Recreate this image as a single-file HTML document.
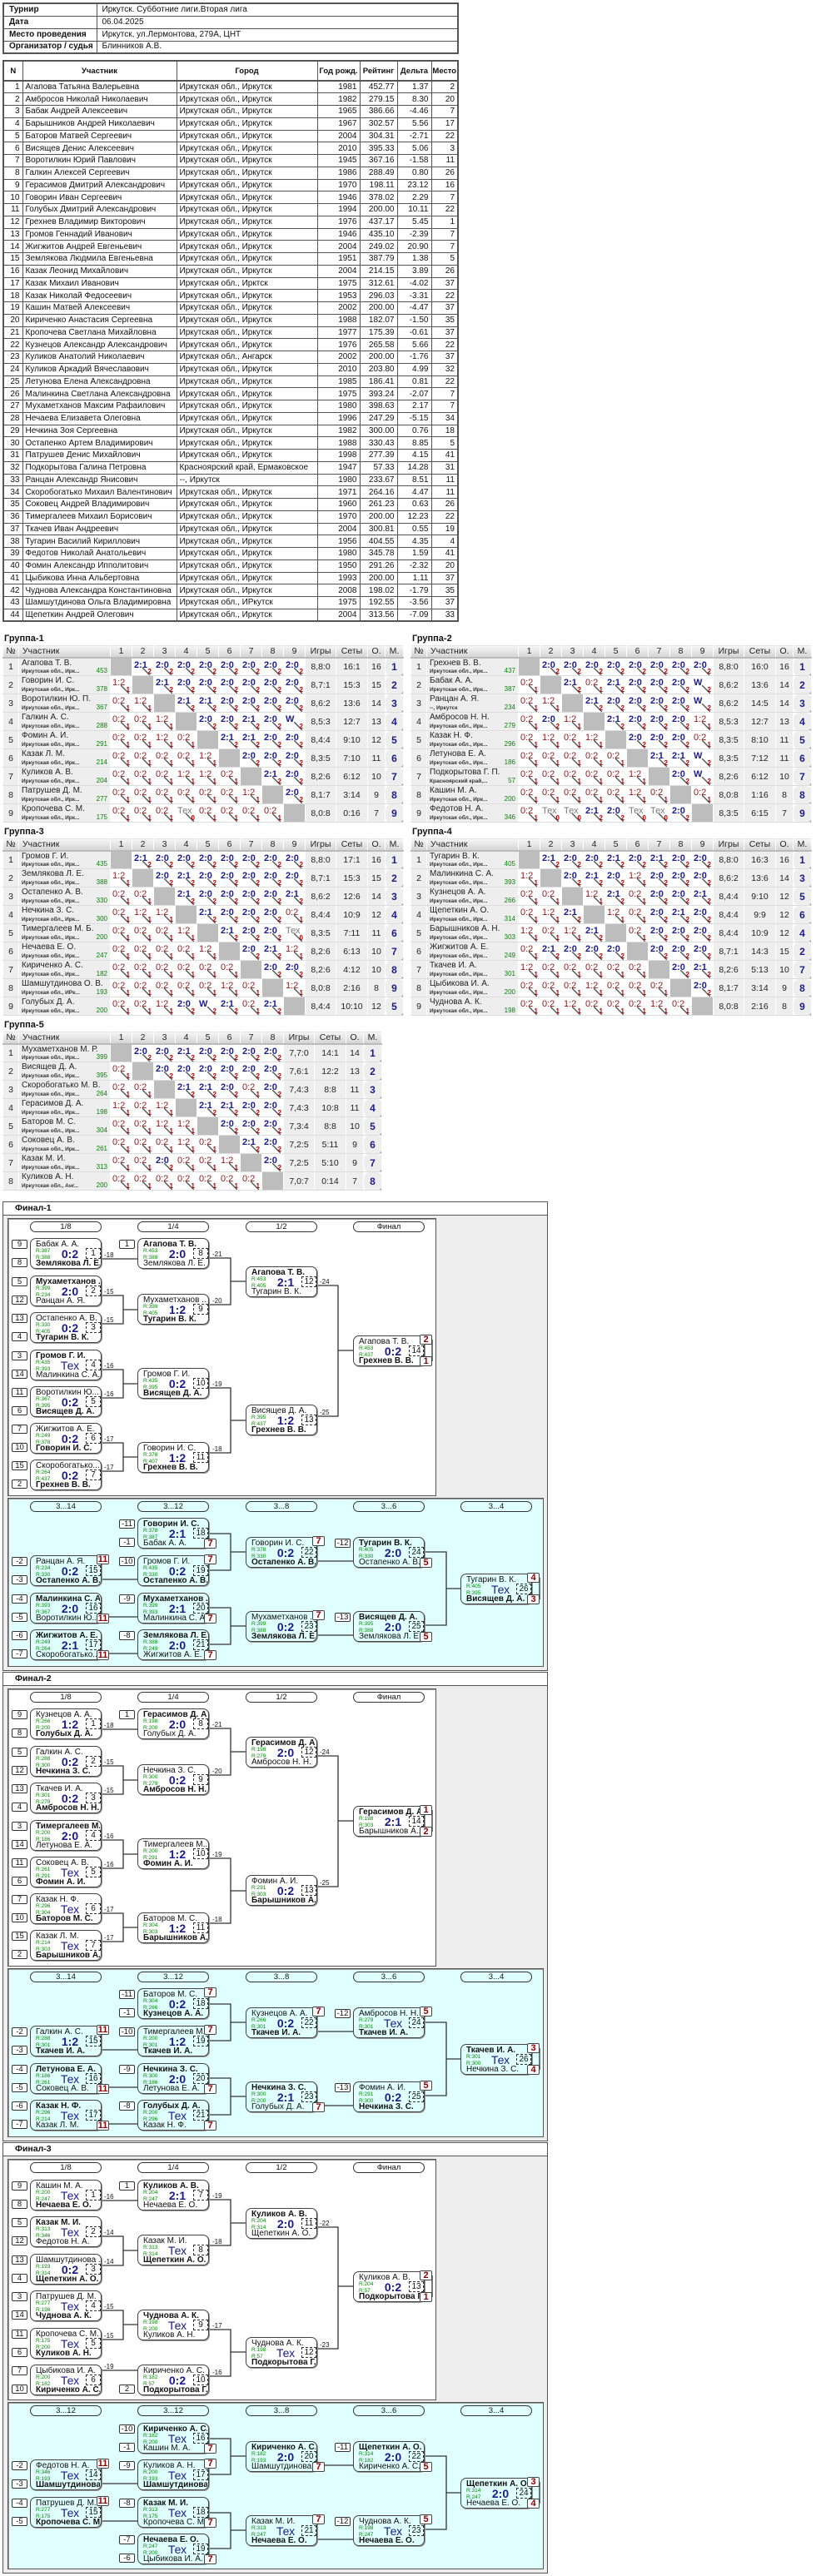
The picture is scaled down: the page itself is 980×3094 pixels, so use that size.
<!DOCTYPE html>
<html><head><meta charset="utf-8">
<style>
*{box-sizing:border-box}
body{margin:0;background:#fff;font-family:"Liberation Sans",Arial,sans-serif;color:#111}
#w{position:relative;width:980px;height:3094px;overflow:hidden}
table{border-collapse:collapse;table-layout:fixed}
.info{position:absolute;left:3px;top:3px;width:548px;font-size:10px;border:2px solid #555}
.info td{border:1px solid #555;height:15px;padding:0 0 0 6px;line-height:12px;white-space:nowrap;overflow:hidden}
.info td:first-child{font-weight:bold}
.pt{position:absolute;left:3px;top:72px;width:548px;font-size:10px;border:2px solid #555}
.pt th{height:24px;border:1px solid #555;border-bottom:2px solid #555;font-weight:bold;padding:0;font-size:9.5px;white-space:nowrap;overflow:hidden}
.pt td{height:14.75px;border:1px solid #555;padding:0 3px;line-height:11px;font-size:10px;white-space:nowrap;overflow:hidden}
.pt td.r{text-align:right}
.gl{position:absolute;font-weight:bold;font-size:11px}
table.g{position:absolute;font-size:11px;border:1px solid #ccc}
.g th{height:15px;background:linear-gradient(#f7f7f7,#d4d4d4);font-weight:normal;border:1px solid #fff;border-bottom:2px solid #bbb;padding:0;font-size:10.5px;color:#222}
.g th.nl{text-align:left;padding-left:4px}
.g td{height:22px;border:1px solid #fff;border-bottom:1px solid #ddd;background:#eee;padding:0;text-align:center;position:relative;font-size:10.5px;color:#222}
.g td.n{text-align:left;padding:0 3px;vertical-align:top;line-height:11px;font-size:10px;white-space:nowrap;overflow:hidden}
.g td.n small{position:absolute;left:3px;bottom:1px;font-size:6.5px;font-weight:bold;color:#333;line-height:7px;white-space:nowrap}
.g td.n b{position:absolute;right:3px;bottom:1px;font-size:8px;font-weight:normal;color:#080;line-height:8px}
.g td.x{background:#bdbdbd}
.g td.w,.g td.l,.g td.t{background:#fff linear-gradient(to top right,transparent 44%,#555 46%,#555 54%,transparent 56%) no-repeat 12px 11px/10px 10px;text-align:left;padding:2px 0 0 2px;vertical-align:top;line-height:12px;font-size:11px}
.g td.w{color:#1b1b8e;font-weight:bold}
.g td.l{color:#8a2020}
.g td.t{color:#777}
.g td u{position:absolute;right:2px;bottom:0;font-size:8px;text-decoration:none;font-weight:bold;color:#a00;line-height:9px}
.g td.m{color:#1b1b8e;font-weight:bold;font-size:12px}
.fo{position:absolute;left:3px;width:655px;border:1px solid #555;background:#eee}
.fh{position:absolute;left:4px;width:653px;height:16px;background:#fff;border-bottom:1px solid #555;font-size:10.5px;font-weight:bold;padding-left:14px;line-height:15px}
.pm{position:absolute;left:9px;width:515px;background:#fff;border:1px solid #555;box-shadow:inset 1px 1px 0 #999}
.pc{position:absolute;left:9px;width:644px;background:#e0ffff;border:1px solid #555;box-shadow:inset 1px 1px 0 #999}
.pi{position:absolute;width:86px;height:13px;border:1px solid #333;border-radius:7px;font-size:9.5px;line-height:11px;text-align:center;background:transparent}
.m{position:absolute;width:86px;height:37px;border:1px solid #444;border-radius:7px;background:#fff;box-shadow:1px 1px 0 #999}
.mc{background:#e0ffff}
.m p{position:absolute;left:6px;margin:0;font-size:10px;line-height:11px;white-space:nowrap;width:77px;overflow:hidden}
.m .a{top:1px}.m .z{top:24px}
.m .k{font-weight:bold}
.m i{position:absolute;left:6px;top:11px;font-style:normal;font-size:6.5px;line-height:7.5px;color:#080}
.m s{position:absolute;left:26px;width:42px;text-align:center;top:11px;text-decoration:none;font-weight:bold;font-size:14px;line-height:14px;color:#1a1a8a}
.m s.tx{font-weight:normal}
.m em{position:absolute;left:66px;top:11px;width:18px;height:13px;border:1px dashed #333;font-style:normal;font-size:10px;line-height:11px;text-align:center;background:inherit}
.sd{position:absolute;width:19px;height:11px;border:1px solid #333;border-radius:2px;font-size:9.5px;line-height:9px;text-align:center;background:#fff}
.pl{position:absolute;width:15px;height:12px;border:1px solid #444;border-radius:2px;background:#fff;color:#8b0000;font-weight:bold;font-size:11px;line-height:10px;text-align:center}
.lb{position:absolute;font-size:8px;line-height:8px}
svg{position:absolute;left:0;top:0}
</style></head><body><div id="w">

<table class="info">
<colgroup><col style="width:112px"><col></colgroup>
<tr><td>Турнир</td><td>Иркутск. Субботние лиги.Вторая лига</td></tr>
<tr><td>Дата</td><td>06.04.2025</td></tr>
<tr><td>Место проведения</td><td>Иркутск, ул.Лермонтова, 279А, ЦНТ</td></tr>
<tr><td>Организатор / судья</td><td>Блинников А.В.</td></tr>
</table>

<table class="pt">
<colgroup><col style="width:23px"><col style="width:185px"><col style="width:169px"><col style="width:51px"><col style="width:45px"><col style="width:41px"><col style="width:32px"></colgroup>
<tr><th>N</th><th>Участник</th><th>Город</th><th>Год рожд.</th><th>Рейтинг</th><th>Дельта</th><th>Место</th></tr>
<tr><td class="r">1</td><td>Агапова Татьяна Валерьевна</td><td>Иркутская обл., Иркутск</td><td class="r">1981</td><td class="r">452.77</td><td class="r">1.37</td><td class="r">2</td></tr>
<tr><td class="r">2</td><td>Амбросов Николай Николаевич</td><td>Иркутская обл., Иркутск</td><td class="r">1982</td><td class="r">279.15</td><td class="r">8.30</td><td class="r">20</td></tr>
<tr><td class="r">3</td><td>Бабак Андрей Алексеевич</td><td>Иркутская обл., Иркутск</td><td class="r">1965</td><td class="r">386.66</td><td class="r">-4.46</td><td class="r">7</td></tr>
<tr><td class="r">4</td><td>Барышников Андрей Николаевич</td><td>Иркутская обл., Иркутск</td><td class="r">1967</td><td class="r">302.57</td><td class="r">5.56</td><td class="r">17</td></tr>
<tr><td class="r">5</td><td>Баторов Матвей Сергеевич</td><td>Иркутская обл., Иркутск</td><td class="r">2004</td><td class="r">304.31</td><td class="r">-2.71</td><td class="r">22</td></tr>
<tr><td class="r">6</td><td>Висящев Денис Алексеевич</td><td>Иркутская обл., Иркутск</td><td class="r">2010</td><td class="r">395.33</td><td class="r">5.06</td><td class="r">3</td></tr>
<tr><td class="r">7</td><td>Воротилкин Юрий Павлович</td><td>Иркутская обл., Иркутск</td><td class="r">1945</td><td class="r">367.16</td><td class="r">-1.58</td><td class="r">11</td></tr>
<tr><td class="r">8</td><td>Галкин Алексей Сергеевич</td><td>Иркутская обл., Иркутск</td><td class="r">1986</td><td class="r">288.49</td><td class="r">0.80</td><td class="r">26</td></tr>
<tr><td class="r">9</td><td>Герасимов Дмитрий Александрович</td><td>Иркутская обл., Иркутск</td><td class="r">1970</td><td class="r">198.11</td><td class="r">23.12</td><td class="r">16</td></tr>
<tr><td class="r">10</td><td>Говорин Иван Сергеевич</td><td>Иркутская обл., Иркутск</td><td class="r">1946</td><td class="r">378.02</td><td class="r">2.29</td><td class="r">7</td></tr>
<tr><td class="r">11</td><td>Голубых Дмитрий Александрович</td><td>Иркутская обл., Иркутск</td><td class="r">1994</td><td class="r">200.00</td><td class="r">10.11</td><td class="r">22</td></tr>
<tr><td class="r">12</td><td>Грехнев Владимир Викторович</td><td>Иркутская обл., Иркутск</td><td class="r">1976</td><td class="r">437.17</td><td class="r">5.45</td><td class="r">1</td></tr>
<tr><td class="r">13</td><td>Громов Геннадий Иванович</td><td>Иркутская обл., Иркутск</td><td class="r">1946</td><td class="r">435.10</td><td class="r">-2.39</td><td class="r">7</td></tr>
<tr><td class="r">14</td><td>Жигжитов Андрей Евгеньевич</td><td>Иркутская обл., Иркутск</td><td class="r">2004</td><td class="r">249.02</td><td class="r">20.90</td><td class="r">7</td></tr>
<tr><td class="r">15</td><td>Землякова Людмила Евгеньевна</td><td>Иркутская обл., Иркутск</td><td class="r">1951</td><td class="r">387.79</td><td class="r">1.38</td><td class="r">5</td></tr>
<tr><td class="r">16</td><td>Казак Леонид Михайлович</td><td>Иркутская обл., Иркутск</td><td class="r">2004</td><td class="r">214.15</td><td class="r">3.89</td><td class="r">26</td></tr>
<tr><td class="r">17</td><td>Казак Михаил Иванович</td><td>Иркутская обл., Ирктск</td><td class="r">1975</td><td class="r">312.61</td><td class="r">-4.02</td><td class="r">37</td></tr>
<tr><td class="r">18</td><td>Казак Николай Федосеевич</td><td>Иркутская обл., Иркутск</td><td class="r">1953</td><td class="r">296.03</td><td class="r">-3.31</td><td class="r">22</td></tr>
<tr><td class="r">19</td><td>Кашин Матвей Алексеевич</td><td>Иркутская обл., Иркутск</td><td class="r">2002</td><td class="r">200.00</td><td class="r">-4.47</td><td class="r">37</td></tr>
<tr><td class="r">20</td><td>Кириченко Анастасия Сергеевна</td><td>Иркутская обл., Иркутск</td><td class="r">1988</td><td class="r">182.07</td><td class="r">-1.50</td><td class="r">35</td></tr>
<tr><td class="r">21</td><td>Кропочева Светлана Михайловна</td><td>Иркутская обл., Иркутск</td><td class="r">1977</td><td class="r">175.39</td><td class="r">-0.61</td><td class="r">37</td></tr>
<tr><td class="r">22</td><td>Кузнецов Александр Александрович</td><td>Иркутская обл., Иркутск</td><td class="r">1976</td><td class="r">265.58</td><td class="r">5.66</td><td class="r">22</td></tr>
<tr><td class="r">23</td><td>Куликов Анатолий Николаевич</td><td>Иркутская обл., Ангарск</td><td class="r">2002</td><td class="r">200.00</td><td class="r">-1.76</td><td class="r">37</td></tr>
<tr><td class="r">24</td><td>Куликов Аркадий Вячеславович</td><td>Иркутская обл., Иркутск</td><td class="r">2010</td><td class="r">203.80</td><td class="r">4.99</td><td class="r">32</td></tr>
<tr><td class="r">25</td><td>Летунова Елена Александровна</td><td>Иркутская обл., Иркутск</td><td class="r">1985</td><td class="r">186.41</td><td class="r">0.81</td><td class="r">22</td></tr>
<tr><td class="r">26</td><td>Малинкина Светлана Александровна</td><td>Иркутская обл., Иркутск</td><td class="r">1975</td><td class="r">393.24</td><td class="r">-2.07</td><td class="r">7</td></tr>
<tr><td class="r">27</td><td>Мухаметханов Максим Рафаилович</td><td>Иркутская обл., Иркутск</td><td class="r">1980</td><td class="r">398.63</td><td class="r">2.17</td><td class="r">7</td></tr>
<tr><td class="r">28</td><td>Нечаева Елизавета Олеговна</td><td>Иркутская обл., Иркутск</td><td class="r">1996</td><td class="r">247.29</td><td class="r">-5.15</td><td class="r">34</td></tr>
<tr><td class="r">29</td><td>Нечкина Зоя Сергеевна</td><td>Иркутская обл., Иркутск</td><td class="r">1982</td><td class="r">300.00</td><td class="r">0.76</td><td class="r">18</td></tr>
<tr><td class="r">30</td><td>Остапенко Артем Владимирович</td><td>Иркутская обл., Иркутск</td><td class="r">1988</td><td class="r">330.43</td><td class="r">8.85</td><td class="r">5</td></tr>
<tr><td class="r">31</td><td>Патрушев Денис Михайлович</td><td>Иркутская обл., Иркутск</td><td class="r">1998</td><td class="r">277.39</td><td class="r">4.15</td><td class="r">41</td></tr>
<tr><td class="r">32</td><td>Подкорытова Галина Петровна</td><td>Красноярский край, Ермаковское</td><td class="r">1947</td><td class="r">57.33</td><td class="r">14.28</td><td class="r">31</td></tr>
<tr><td class="r">33</td><td>Ранцан Александр Янисович</td><td>--, Иркутск</td><td class="r">1980</td><td class="r">233.67</td><td class="r">8.51</td><td class="r">11</td></tr>
<tr><td class="r">34</td><td>Скоробогатько Михаил Валентинович</td><td>Иркутская обл., Иркутск</td><td class="r">1971</td><td class="r">264.16</td><td class="r">4.47</td><td class="r">11</td></tr>
<tr><td class="r">35</td><td>Соковец Андрей Владимирович</td><td>Иркутская обл., Иркутск</td><td class="r">1960</td><td class="r">261.23</td><td class="r">0.63</td><td class="r">26</td></tr>
<tr><td class="r">36</td><td>Тимергалеев Михаил Борисович</td><td>Иркутская обл., Иркутск</td><td class="r">1970</td><td class="r">200.00</td><td class="r">12.23</td><td class="r">22</td></tr>
<tr><td class="r">37</td><td>Ткачев Иван Андреевич</td><td>Иркутская обл., Иркутск</td><td class="r">2004</td><td class="r">300.81</td><td class="r">0.55</td><td class="r">19</td></tr>
<tr><td class="r">38</td><td>Тугарин Василий Кириллович</td><td>Иркутская обл., Иркутск</td><td class="r">1956</td><td class="r">404.55</td><td class="r">4.35</td><td class="r">4</td></tr>
<tr><td class="r">39</td><td>Федотов Николай Анатольевич</td><td>Иркутская обл., Иркутск</td><td class="r">1980</td><td class="r">345.78</td><td class="r">1.59</td><td class="r">41</td></tr>
<tr><td class="r">40</td><td>Фомин Александр Ипполитович</td><td>Иркутская обл., Иркутск</td><td class="r">1950</td><td class="r">291.26</td><td class="r">-2.32</td><td class="r">20</td></tr>
<tr><td class="r">41</td><td>Цыбикова Инна Альбертовна</td><td>Иркутская обл., Иркутск</td><td class="r">1993</td><td class="r">200.00</td><td class="r">1.11</td><td class="r">37</td></tr>
<tr><td class="r">42</td><td>Чуднова Александра Константиновна</td><td>Иркутская обл., Иркутск</td><td class="r">2008</td><td class="r">198.02</td><td class="r">-1.79</td><td class="r">35</td></tr>
<tr><td class="r">43</td><td>Шамшутдинова Ольга Владимировна</td><td>Иркутская обл., ИРкутск</td><td class="r">1975</td><td class="r">192.55</td><td class="r">-3.56</td><td class="r">37</td></tr>
<tr><td class="r">44</td><td>Щепеткин Андрей Олегович</td><td>Иркутская обл., Иркутск</td><td class="r">2004</td><td class="r">313.56</td><td class="r">-7.09</td><td class="r">33</td></tr>
</table>

<!-- GROUP 1 -->
<div class="gl" style="left:5px;top:761px">Группа-1</div>
<table class="g" style="left:3px;top:774px;width:482px">
<colgroup><col style="width:19px"><col style="width:110px"><col style="width:26px"><col style="width:26px"><col style="width:26px"><col style="width:26px"><col style="width:26px"><col style="width:26px"><col style="width:26px"><col style="width:26px"><col style="width:26px"><col style="width:37px"><col style="width:38px"><col style="width:21px"><col style="width:22px"></colgroup>
<tr><th>№</th><th class="nl">Участник</th><th>1</th><th>2</th><th>3</th><th>4</th><th>5</th><th>6</th><th>7</th><th>8</th><th>9</th><th>Игры</th><th>Сеты</th><th>О.</th><th>М.</th></tr>
<tr><td>1</td><td class="n">Агапова Т. В.<small>Иркутская обл., Ирк...</small><b>453</b></td><td class="x"></td><td class="w">2:1<u>2</u></td><td class="w">2:0<u>2</u></td><td class="w">2:0<u>2</u></td><td class="w">2:0<u>2</u></td><td class="w">2:0<u>2</u></td><td class="w">2:0<u>2</u></td><td class="w">2:0<u>2</u></td><td class="w">2:0<u>2</u></td><td>8,8:0</td><td>16:1</td><td>16</td><td class="m">1</td></tr>
<tr><td>2</td><td class="n">Говорин И. С.<small>Иркутская обл., Ирк...</small><b>378</b></td><td class="l">1:2<u>1</u></td><td class="x"></td><td class="w">2:1<u>2</u></td><td class="w">2:0<u>2</u></td><td class="w">2:0<u>2</u></td><td class="w">2:0<u>2</u></td><td class="w">2:0<u>2</u></td><td class="w">2:0<u>2</u></td><td class="w">2:0<u>2</u></td><td>8,7:1</td><td>15:3</td><td>15</td><td class="m">2</td></tr>
<tr><td>3</td><td class="n">Воротилкин Ю. П.<small>Иркутская обл., Ирк...</small><b>367</b></td><td class="l">0:2<u>1</u></td><td class="l">1:2<u>1</u></td><td class="x"></td><td class="w">2:1<u>2</u></td><td class="w">2:1<u>2</u></td><td class="w">2:0<u>2</u></td><td class="w">2:0<u>2</u></td><td class="w">2:0<u>2</u></td><td class="w">2:0<u>2</u></td><td>8,6:2</td><td>13:6</td><td>14</td><td class="m">3</td></tr>
<tr><td>4</td><td class="n">Галкин А. С.<small>Иркутская обл., Ирк...</small><b>288</b></td><td class="l">0:2<u>1</u></td><td class="l">0:2<u>1</u></td><td class="l">1:2<u>1</u></td><td class="x"></td><td class="w">2:0<u>2</u></td><td class="w">2:0<u>2</u></td><td class="w">2:1<u>2</u></td><td class="w">2:0<u>2</u></td><td class="w">W<u>2</u></td><td>8,5:3</td><td>12:7</td><td>13</td><td class="m">4</td></tr>
<tr><td>5</td><td class="n">Фомин А. И.<small>Иркутская обл., Ирк...</small><b>291</b></td><td class="l">0:2<u>1</u></td><td class="l">0:2<u>1</u></td><td class="l">1:2<u>1</u></td><td class="l">0:2<u>1</u></td><td class="x"></td><td class="w">2:1<u>2</u></td><td class="w">2:1<u>2</u></td><td class="w">2:0<u>2</u></td><td class="w">2:0<u>2</u></td><td>8,4:4</td><td>9:10</td><td>12</td><td class="m">5</td></tr>
<tr><td>6</td><td class="n">Казак Л. М.<small>Иркутская обл., Ирк...</small><b>214</b></td><td class="l">0:2<u>1</u></td><td class="l">0:2<u>1</u></td><td class="l">0:2<u>1</u></td><td class="l">0:2<u>1</u></td><td class="l">1:2<u>1</u></td><td class="x"></td><td class="w">2:0<u>2</u></td><td class="w">2:0<u>2</u></td><td class="w">2:0<u>2</u></td><td>8,3:5</td><td>7:10</td><td>11</td><td class="m">6</td></tr>
<tr><td>7</td><td class="n">Куликов А. В.<small>Иркутская обл., Ирк...</small><b>204</b></td><td class="l">0:2<u>1</u></td><td class="l">0:2<u>1</u></td><td class="l">0:2<u>1</u></td><td class="l">1:2<u>1</u></td><td class="l">1:2<u>1</u></td><td class="l">0:2<u>1</u></td><td class="x"></td><td class="w">2:1<u>2</u></td><td class="w">2:0<u>2</u></td><td>8,2:6</td><td>6:12</td><td>10</td><td class="m">7</td></tr>
<tr><td>8</td><td class="n">Патрушев Д. М.<small>Иркутская обл., Ирк...</small><b>277</b></td><td class="l">0:2<u>1</u></td><td class="l">0:2<u>1</u></td><td class="l">0:2<u>1</u></td><td class="l">0:2<u>1</u></td><td class="l">0:2<u>1</u></td><td class="l">0:2<u>1</u></td><td class="l">1:2<u>1</u></td><td class="x"></td><td class="w">2:0<u>2</u></td><td>8,1:7</td><td>3:14</td><td>9</td><td class="m">8</td></tr>
<tr><td>9</td><td class="n">Кропочева С. М.<small>Иркутская обл., Ирк...</small><b>175</b></td><td class="l">0:2<u>1</u></td><td class="l">0:2<u>1</u></td><td class="l">0:2<u>1</u></td><td class="t">Тех<u>0</u></td><td class="l">0:2<u>1</u></td><td class="l">0:2<u>1</u></td><td class="l">0:2<u>1</u></td><td class="l">0:2<u>1</u></td><td class="x"></td><td>8,0:8</td><td>0:16</td><td>7</td><td class="m">9</td></tr>
</table>

<!-- GROUP 2 -->
<div class="gl" style="left:495px;top:761px">Группа-2</div>
<table class="g" style="left:493px;top:774px;width:482px">
<colgroup><col style="width:19px"><col style="width:110px"><col style="width:26px"><col style="width:26px"><col style="width:26px"><col style="width:26px"><col style="width:26px"><col style="width:26px"><col style="width:26px"><col style="width:26px"><col style="width:26px"><col style="width:37px"><col style="width:38px"><col style="width:21px"><col style="width:22px"></colgroup>
<tr><th>№</th><th class="nl">Участник</th><th>1</th><th>2</th><th>3</th><th>4</th><th>5</th><th>6</th><th>7</th><th>8</th><th>9</th><th>Игры</th><th>Сеты</th><th>О.</th><th>М.</th></tr>
<tr><td>1</td><td class="n">Грехнев В. В.<small>Иркутская обл., Ирк...</small><b>437</b></td><td class="x"></td><td class="w">2:0<u>2</u></td><td class="w">2:0<u>2</u></td><td class="w">2:0<u>2</u></td><td class="w">2:0<u>2</u></td><td class="w">2:0<u>2</u></td><td class="w">2:0<u>2</u></td><td class="w">2:0<u>2</u></td><td class="w">2:0<u>2</u></td><td>8,8:0</td><td>16:0</td><td>16</td><td class="m">1</td></tr>
<tr><td>2</td><td class="n">Бабак А. А.<small>Иркутская обл., Ирк...</small><b>387</b></td><td class="l">0:2<u>1</u></td><td class="x"></td><td class="w">2:1<u>2</u></td><td class="l">0:2<u>1</u></td><td class="w">2:1<u>2</u></td><td class="w">2:0<u>2</u></td><td class="w">2:0<u>2</u></td><td class="w">2:0<u>2</u></td><td class="w">W<u>2</u></td><td>8,6:2</td><td>13:6</td><td>14</td><td class="m">2</td></tr>
<tr><td>3</td><td class="n">Ранцан А. Я.<small>--, Иркутск</small><b>234</b></td><td class="l">0:2<u>1</u></td><td class="l">1:2<u>1</u></td><td class="x"></td><td class="w">2:1<u>2</u></td><td class="w">2:0<u>2</u></td><td class="w">2:0<u>2</u></td><td class="w">2:0<u>2</u></td><td class="w">2:0<u>2</u></td><td class="w">W<u>2</u></td><td>8,6:2</td><td>14:5</td><td>14</td><td class="m">3</td></tr>
<tr><td>4</td><td class="n">Амбросов Н. Н.<small>Иркутская обл., Ирк...</small><b>279</b></td><td class="l">0:2<u>1</u></td><td class="w">2:0<u>2</u></td><td class="l">1:2<u>1</u></td><td class="x"></td><td class="w">2:1<u>2</u></td><td class="w">2:0<u>2</u></td><td class="w">2:0<u>2</u></td><td class="w">2:0<u>2</u></td><td class="l">1:2<u>1</u></td><td>8,5:3</td><td>12:7</td><td>13</td><td class="m">4</td></tr>
<tr><td>5</td><td class="n">Казак Н. Ф.<small>Иркутская обл., Ирк...</small><b>296</b></td><td class="l">0:2<u>1</u></td><td class="l">1:2<u>1</u></td><td class="l">0:2<u>1</u></td><td class="l">1:2<u>1</u></td><td class="x"></td><td class="w">2:0<u>2</u></td><td class="w">2:0<u>2</u></td><td class="w">2:0<u>2</u></td><td class="l">0:2<u>1</u></td><td>8,3:5</td><td>8:10</td><td>11</td><td class="m">5</td></tr>
<tr><td>6</td><td class="n">Летунова Е. А.<small>Иркутская обл., Ирк...</small><b>186</b></td><td class="l">0:2<u>1</u></td><td class="l">0:2<u>1</u></td><td class="l">0:2<u>1</u></td><td class="l">0:2<u>1</u></td><td class="l">0:2<u>1</u></td><td class="x"></td><td class="w">2:1<u>2</u></td><td class="w">2:1<u>2</u></td><td class="w">W<u>2</u></td><td>8,3:5</td><td>7:12</td><td>11</td><td class="m">6</td></tr>
<tr><td>7</td><td class="n">Подкорытова Г. П.<small>Красноярский край,...</small><b>57</b></td><td class="l">0:2<u>1</u></td><td class="l">0:2<u>1</u></td><td class="l">0:2<u>1</u></td><td class="l">0:2<u>1</u></td><td class="l">0:2<u>1</u></td><td class="l">1:2<u>1</u></td><td class="x"></td><td class="w">2:0<u>2</u></td><td class="w">W<u>2</u></td><td>8,2:6</td><td>6:12</td><td>10</td><td class="m">7</td></tr>
<tr><td>8</td><td class="n">Кашин М. А.<small>Иркутская обл., Ирк...</small><b>200</b></td><td class="l">0:2<u>1</u></td><td class="l">0:2<u>1</u></td><td class="l">0:2<u>1</u></td><td class="l">0:2<u>1</u></td><td class="l">0:2<u>1</u></td><td class="l">1:2<u>1</u></td><td class="l">0:2<u>1</u></td><td class="x"></td><td class="l">0:2<u>1</u></td><td>8,0:8</td><td>1:16</td><td>8</td><td class="m">8</td></tr>
<tr><td>9</td><td class="n">Федотов Н. А.<small>Иркутская обл., Ирк...</small><b>346</b></td><td class="l">0:2<u>1</u></td><td class="t">Тех<u>0</u></td><td class="t">Тех<u>0</u></td><td class="w">2:1<u>2</u></td><td class="w">2:0<u>2</u></td><td class="t">Тех<u>0</u></td><td class="t">Тех<u>0</u></td><td class="w">2:0<u>2</u></td><td class="x"></td><td>8,3:5</td><td>6:15</td><td>7</td><td class="m">9</td></tr>
</table>

<!-- GROUP 3 -->
<div class="gl" style="left:5px;top:993px">Группа-3</div>
<table class="g" style="left:3px;top:1006px;width:482px">
<colgroup><col style="width:19px"><col style="width:110px"><col style="width:26px"><col style="width:26px"><col style="width:26px"><col style="width:26px"><col style="width:26px"><col style="width:26px"><col style="width:26px"><col style="width:26px"><col style="width:26px"><col style="width:37px"><col style="width:38px"><col style="width:21px"><col style="width:22px"></colgroup>
<tr><th>№</th><th class="nl">Участник</th><th>1</th><th>2</th><th>3</th><th>4</th><th>5</th><th>6</th><th>7</th><th>8</th><th>9</th><th>Игры</th><th>Сеты</th><th>О.</th><th>М.</th></tr>
<tr><td>1</td><td class="n">Громов Г. И.<small>Иркутская обл., Ирк...</small><b>435</b></td><td class="x"></td><td class="w">2:1<u>2</u></td><td class="w">2:0<u>2</u></td><td class="w">2:0<u>2</u></td><td class="w">2:0<u>2</u></td><td class="w">2:0<u>2</u></td><td class="w">2:0<u>2</u></td><td class="w">2:0<u>2</u></td><td class="w">2:0<u>2</u></td><td>8,8:0</td><td>17:1</td><td>16</td><td class="m">1</td></tr>
<tr><td>2</td><td class="n">Землякова Л. Е.<small>Иркутская обл., Ирк...</small><b>388</b></td><td class="l">1:2<u>1</u></td><td class="x"></td><td class="w">2:0<u>2</u></td><td class="w">2:1<u>2</u></td><td class="w">2:0<u>2</u></td><td class="w">2:0<u>2</u></td><td class="w">2:0<u>2</u></td><td class="w">2:0<u>2</u></td><td class="w">2:0<u>2</u></td><td>8,7:1</td><td>15:3</td><td>15</td><td class="m">2</td></tr>
<tr><td>3</td><td class="n">Остапенко А. В.<small>Иркутская обл., Ирк...</small><b>330</b></td><td class="l">0:2<u>1</u></td><td class="l">0:2<u>1</u></td><td class="x"></td><td class="w">2:1<u>2</u></td><td class="w">2:0<u>2</u></td><td class="w">2:0<u>2</u></td><td class="w">2:0<u>2</u></td><td class="w">2:0<u>2</u></td><td class="w">2:1<u>2</u></td><td>8,6:2</td><td>12:6</td><td>14</td><td class="m">3</td></tr>
<tr><td>4</td><td class="n">Нечкина З. С.<small>Иркутская обл., Ирк...</small><b>300</b></td><td class="l">0:2<u>1</u></td><td class="l">1:2<u>1</u></td><td class="l">1:2<u>1</u></td><td class="x"></td><td class="w">2:1<u>2</u></td><td class="w">2:0<u>2</u></td><td class="w">2:0<u>2</u></td><td class="w">2:0<u>2</u></td><td class="l">0:2<u>1</u></td><td>8,4:4</td><td>10:9</td><td>12</td><td class="m">4</td></tr>
<tr><td>5</td><td class="n">Тимергалеев М. Б.<small>Иркутская обл., Ирк...</small><b>200</b></td><td class="l">0:2<u>1</u></td><td class="l">0:2<u>1</u></td><td class="l">0:2<u>1</u></td><td class="l">1:2<u>1</u></td><td class="x"></td><td class="w">2:1<u>2</u></td><td class="w">2:0<u>2</u></td><td class="w">2:0<u>2</u></td><td class="t">Тех<u>0</u></td><td>8,3:5</td><td>7:11</td><td>11</td><td class="m">6</td></tr>
<tr><td>6</td><td class="n">Нечаева Е. О.<small>Иркутская обл., Ирк...</small><b>247</b></td><td class="l">0:2<u>1</u></td><td class="l">0:2<u>1</u></td><td class="l">0:2<u>1</u></td><td class="l">0:2<u>1</u></td><td class="l">1:2<u>1</u></td><td class="x"></td><td class="w">2:0<u>2</u></td><td class="w">2:1<u>2</u></td><td class="l">1:2<u>1</u></td><td>8,2:6</td><td>6:13</td><td>10</td><td class="m">7</td></tr>
<tr><td>7</td><td class="n">Кириченко А. С.<small>Иркутская обл., Ирк...</small><b>182</b></td><td class="l">0:2<u>1</u></td><td class="l">0:2<u>1</u></td><td class="l">0:2<u>1</u></td><td class="l">0:2<u>1</u></td><td class="l">0:2<u>1</u></td><td class="l">0:2<u>1</u></td><td class="x"></td><td class="w">2:0<u>2</u></td><td class="w">2:0<u>2</u></td><td>8,2:6</td><td>4:12</td><td>10</td><td class="m">8</td></tr>
<tr><td>8</td><td class="n">Шамшутдинова О. В.<small>Иркутская обл., ИРк...</small><b>193</b></td><td class="l">0:2<u>1</u></td><td class="l">0:2<u>1</u></td><td class="l">0:2<u>1</u></td><td class="l">0:2<u>1</u></td><td class="l">0:2<u>1</u></td><td class="l">1:2<u>1</u></td><td class="l">0:2<u>1</u></td><td class="x"></td><td class="l">1:2<u>1</u></td><td>8,0:8</td><td>2:16</td><td>8</td><td class="m">9</td></tr>
<tr><td>9</td><td class="n">Голубых Д. А.<small>Иркутская обл., Ирк...</small><b>200</b></td><td class="l">0:2<u>1</u></td><td class="l">0:2<u>1</u></td><td class="l">1:2<u>1</u></td><td class="w">2:0<u>2</u></td><td class="w">W<u>2</u></td><td class="w">2:1<u>2</u></td><td class="l">0:2<u>1</u></td><td class="w">2:1<u>2</u></td><td class="x"></td><td>8,4:4</td><td>10:10</td><td>12</td><td class="m">5</td></tr>
</table>

<!-- GROUP 4 -->
<div class="gl" style="left:495px;top:993px">Группа-4</div>
<table class="g" style="left:493px;top:1006px;width:482px">
<colgroup><col style="width:19px"><col style="width:110px"><col style="width:26px"><col style="width:26px"><col style="width:26px"><col style="width:26px"><col style="width:26px"><col style="width:26px"><col style="width:26px"><col style="width:26px"><col style="width:26px"><col style="width:37px"><col style="width:38px"><col style="width:21px"><col style="width:22px"></colgroup>
<tr><th>№</th><th class="nl">Участник</th><th>1</th><th>2</th><th>3</th><th>4</th><th>5</th><th>6</th><th>7</th><th>8</th><th>9</th><th>Игры</th><th>Сеты</th><th>О.</th><th>М.</th></tr>
<tr><td>1</td><td class="n">Тугарин В. К.<small>Иркутская обл., Ирк...</small><b>405</b></td><td class="x"></td><td class="w">2:1<u>2</u></td><td class="w">2:0<u>2</u></td><td class="w">2:0<u>2</u></td><td class="w">2:1<u>2</u></td><td class="w">2:0<u>2</u></td><td class="w">2:1<u>2</u></td><td class="w">2:0<u>2</u></td><td class="w">2:0<u>2</u></td><td>8,8:0</td><td>16:3</td><td>16</td><td class="m">1</td></tr>
<tr><td>2</td><td class="n">Малинкина С. А.<small>Иркутская обл., Ирк...</small><b>393</b></td><td class="l">1:2<u>1</u></td><td class="x"></td><td class="w">2:0<u>2</u></td><td class="w">2:1<u>2</u></td><td class="w">2:0<u>2</u></td><td class="l">1:2<u>1</u></td><td class="w">2:0<u>2</u></td><td class="w">2:0<u>2</u></td><td class="w">2:0<u>2</u></td><td>8,6:2</td><td>13:6</td><td>14</td><td class="m">3</td></tr>
<tr><td>3</td><td class="n">Кузнецов А. А.<small>Иркутская обл., Ирк...</small><b>266</b></td><td class="l">0:2<u>1</u></td><td class="l">0:2<u>1</u></td><td class="x"></td><td class="l">1:2<u>1</u></td><td class="w">2:1<u>2</u></td><td class="l">0:2<u>1</u></td><td class="w">2:0<u>2</u></td><td class="w">2:0<u>2</u></td><td class="w">2:1<u>2</u></td><td>8,4:4</td><td>9:10</td><td>12</td><td class="m">5</td></tr>
<tr><td>4</td><td class="n">Щепеткин А. О.<small>Иркутская обл., Ирк...</small><b>314</b></td><td class="l">0:2<u>1</u></td><td class="l">1:2<u>1</u></td><td class="w">2:1<u>2</u></td><td class="x"></td><td class="l">1:2<u>1</u></td><td class="l">0:2<u>1</u></td><td class="w">2:0<u>2</u></td><td class="w">2:1<u>2</u></td><td class="w">2:0<u>2</u></td><td>8,4:4</td><td>9:9</td><td>12</td><td class="m">6</td></tr>
<tr><td>5</td><td class="n">Барышников А. Н.<small>Иркутская обл., Ирк...</small><b>303</b></td><td class="l">1:2<u>1</u></td><td class="l">0:2<u>1</u></td><td class="l">1:2<u>1</u></td><td class="w">2:1<u>2</u></td><td class="x"></td><td class="l">0:2<u>1</u></td><td class="w">2:0<u>2</u></td><td class="w">2:0<u>2</u></td><td class="w">2:0<u>2</u></td><td>8,4:4</td><td>10:9</td><td>12</td><td class="m">4</td></tr>
<tr><td>6</td><td class="n">Жигжитов А. Е.<small>Иркутская обл., Ирк...</small><b>249</b></td><td class="l">0:2<u>1</u></td><td class="w">2:1<u>2</u></td><td class="w">2:0<u>2</u></td><td class="w">2:0<u>2</u></td><td class="w">2:0<u>2</u></td><td class="x"></td><td class="w">2:0<u>2</u></td><td class="w">2:0<u>2</u></td><td class="w">2:0<u>2</u></td><td>8,7:1</td><td>14:3</td><td>15</td><td class="m">2</td></tr>
<tr><td>7</td><td class="n">Ткачев И. А.<small>Иркутская обл., Ирк...</small><b>301</b></td><td class="l">1:2<u>1</u></td><td class="l">0:2<u>1</u></td><td class="l">0:2<u>1</u></td><td class="l">0:2<u>1</u></td><td class="l">0:2<u>1</u></td><td class="l">0:2<u>1</u></td><td class="x"></td><td class="w">2:0<u>2</u></td><td class="w">2:1<u>2</u></td><td>8,2:6</td><td>5:13</td><td>10</td><td class="m">7</td></tr>
<tr><td>8</td><td class="n">Цыбикова И. А.<small>Иркутская обл., Ирк...</small><b>200</b></td><td class="l">0:2<u>1</u></td><td class="l">0:2<u>1</u></td><td class="l">0:2<u>1</u></td><td class="l">1:2<u>1</u></td><td class="l">0:2<u>1</u></td><td class="l">0:2<u>1</u></td><td class="l">0:2<u>1</u></td><td class="x"></td><td class="w">2:0<u>2</u></td><td>8,1:7</td><td>3:14</td><td>9</td><td class="m">8</td></tr>
<tr><td>9</td><td class="n">Чуднова А. К.<small>Иркутская обл., Ирк...</small><b>198</b></td><td class="l">0:2<u>1</u></td><td class="l">0:2<u>1</u></td><td class="l">1:2<u>1</u></td><td class="l">0:2<u>1</u></td><td class="l">0:2<u>1</u></td><td class="l">0:2<u>1</u></td><td class="l">1:2<u>1</u></td><td class="l">0:2<u>1</u></td><td class="x"></td><td>8,0:8</td><td>2:16</td><td>8</td><td class="m">9</td></tr>
</table>

<!-- GROUP 5 -->
<div class="gl" style="left:5px;top:1225px">Группа-5</div>
<table class="g" style="left:3px;top:1238px;width:456px">
<colgroup><col style="width:19px"><col style="width:110px"><col style="width:26px"><col style="width:26px"><col style="width:26px"><col style="width:26px"><col style="width:26px"><col style="width:26px"><col style="width:26px"><col style="width:26px"><col style="width:37px"><col style="width:38px"><col style="width:21px"><col style="width:22px"></colgroup>
<tr><th>№</th><th class="nl">Участник</th><th>1</th><th>2</th><th>3</th><th>4</th><th>5</th><th>6</th><th>7</th><th>8</th><th>Игры</th><th>Сеты</th><th>О.</th><th>М.</th></tr>
<tr><td>1</td><td class="n">Мухаметханов М. Р.<small>Иркутская обл., Ирк...</small><b>399</b></td><td class="x"></td><td class="w">2:0<u>2</u></td><td class="w">2:0<u>2</u></td><td class="w">2:1<u>2</u></td><td class="w">2:0<u>2</u></td><td class="w">2:0<u>2</u></td><td class="w">2:0<u>2</u></td><td class="w">2:0<u>2</u></td><td>7,7:0</td><td>14:1</td><td>14</td><td class="m">1</td></tr>
<tr><td>2</td><td class="n">Висящев Д. А.<small>Иркутская обл., Ирк...</small><b>395</b></td><td class="l">0:2<u>1</u></td><td class="x"></td><td class="w">2:0<u>2</u></td><td class="w">2:0<u>2</u></td><td class="w">2:0<u>2</u></td><td class="w">2:0<u>2</u></td><td class="w">2:0<u>2</u></td><td class="w">2:0<u>2</u></td><td>7,6:1</td><td>12:2</td><td>13</td><td class="m">2</td></tr>
<tr><td>3</td><td class="n">Скоробогатько М. В.<small>Иркутская обл., Ирк...</small><b>264</b></td><td class="l">0:2<u>1</u></td><td class="l">0:2<u>1</u></td><td class="x"></td><td class="w">2:1<u>2</u></td><td class="w">2:1<u>2</u></td><td class="w">2:0<u>2</u></td><td class="l">0:2<u>1</u></td><td class="w">2:0<u>2</u></td><td>7,4:3</td><td>8:8</td><td>11</td><td class="m">3</td></tr>
<tr><td>4</td><td class="n">Герасимов Д. А.<small>Иркутская обл., Ирк...</small><b>198</b></td><td class="l">1:2<u>1</u></td><td class="l">0:2<u>1</u></td><td class="l">1:2<u>1</u></td><td class="x"></td><td class="w">2:1<u>2</u></td><td class="w">2:1<u>2</u></td><td class="w">2:0<u>2</u></td><td class="w">2:0<u>2</u></td><td>7,4:3</td><td>10:8</td><td>11</td><td class="m">4</td></tr>
<tr><td>5</td><td class="n">Баторов М. С.<small>Иркутская обл., Ирк...</small><b>304</b></td><td class="l">0:2<u>1</u></td><td class="l">0:2<u>1</u></td><td class="l">1:2<u>1</u></td><td class="l">1:2<u>1</u></td><td class="x"></td><td class="w">2:0<u>2</u></td><td class="w">2:0<u>2</u></td><td class="w">2:0<u>2</u></td><td>7,3:4</td><td>8:8</td><td>10</td><td class="m">5</td></tr>
<tr><td>6</td><td class="n">Соковец А. В.<small>Иркутская обл., Ирк...</small><b>261</b></td><td class="l">0:2<u>1</u></td><td class="l">0:2<u>1</u></td><td class="l">0:2<u>1</u></td><td class="l">1:2<u>1</u></td><td class="l">0:2<u>1</u></td><td class="x"></td><td class="w">2:1<u>2</u></td><td class="w">2:0<u>2</u></td><td>7,2:5</td><td>5:11</td><td>9</td><td class="m">6</td></tr>
<tr><td>7</td><td class="n">Казак М. И.<small>Иркутская обл., Ирк...</small><b>313</b></td><td class="l">0:2<u>1</u></td><td class="l">0:2<u>1</u></td><td class="w">2:0<u>2</u></td><td class="l">0:2<u>1</u></td><td class="l">0:2<u>1</u></td><td class="l">1:2<u>1</u></td><td class="x"></td><td class="w">2:0<u>2</u></td><td>7,2:5</td><td>5:10</td><td>9</td><td class="m">7</td></tr>
<tr><td>8</td><td class="n">Куликов А. Н.<small>Иркутская обл., Анг...</small><b>200</b></td><td class="l">0:2<u>1</u></td><td class="l">0:2<u>1</u></td><td class="l">0:2<u>1</u></td><td class="l">0:2<u>1</u></td><td class="l">0:2<u>1</u></td><td class="l">0:2<u>1</u></td><td class="l">0:2<u>1</u></td><td class="x"></td><td>7,0:7</td><td>0:14</td><td>7</td><td class="m">8</td></tr>
</table>

<!-- FRAMES -->
<div class="fo" style="top:1443px;height:564px"></div>
<div class="fh" style="top:1444px">Финал-1</div>
<div class="pm" style="top:1463px;height:334px"></div>
<div class="pc" style="top:1799px;height:203px"></div>

<div class="fo" style="top:2008px;height:564px"></div>
<div class="fh" style="top:2009px">Финал-2</div>
<div class="pm" style="top:2028px;height:334px"></div>
<div class="pc" style="top:2364px;height:203px"></div>

<div class="fo" style="top:2573px;height:518px"></div>
<div class="fh" style="top:2574px">Финал-3</div>
<div class="pm" style="top:2593px;height:290px"></div>
<div class="pc" style="top:2885px;height:201px"></div>

<svg width="980" height="3094" fill="none" stroke="#333" stroke-width="1.3">
<path d="M122 1512H165M122 1556H148V1590H122M148 1573H165M122 1645H148V1679H122M148 1662H165M122 1733H148V1767H122M148 1750H165M252 1511H277V1567H252M277 1539H295M252 1667H277V1745H252M277 1706H295M381 1544H406V1701H381M406 1622H424"/>
<path d="M122 1897H165M122 1942H165M122 1986H165M252 1842H277V1886H252M277 1864H295M252 1931H277V1975H252M277 1953H295M381 1875H424M381 1964H424M511 1864H536V1952H511M536 1908H553"/>
<path d="M122 2077H165M122 2121H148V2155H122M148 2138H165M122 2210H148V2244H122M148 2227H165M122 2298H148V2332H122M148 2315H165M252 2076H277V2132H252M277 2104H295M252 2232H277V2310H252M277 2271H295M381 2109H406V2266H381M406 2187H424"/>
<path d="M122 2462H165M122 2507H165M122 2551H165M252 2407H277V2451H252M277 2429H295M252 2496H277V2540H252M277 2518H295M381 2440H424M381 2529H424M511 2429H536V2517H511M536 2473H553"/>
<path d="M122 2643H165M122 2686H148V2721H122M148 2703H165M122 2775H148V2810H122M148 2792H165M122 2847H165M252 2642H277V2697H252M277 2670H295M252 2798H277V2854H252M277 2825H295M381 2675H406V2821H381M406 2746H424"/>
<path d="M122 2983H165M122 3028H165M252 2929H277V2972H252M277 2950H295M252 3018H277V3061H252M277 3039H295M381 2961H424M381 3050H424M511 2950H536V3038H511M536 2994H553"/>
<path d="M519 1609V1635M519 2174V2200M519 2733V2759M648 1895V1921M648 2460V2486M648 2981V3007"/>
</svg>

<!-- ===== FINAL-1 ===== -->
<div class="pi" style="left:36px;top:1467px">1/8</div><div class="pi" style="left:165px;top:1467px">1/4</div><div class="pi" style="left:295px;top:1467px">1/2</div><div class="pi" style="left:424px;top:1467px">Финал</div>
<div class="sd" style="left:14px;top:1489px">9</div><div class="sd" style="left:14px;top:1511px">8</div>
<div class="sd" style="left:14px;top:1534px">5</div><div class="sd" style="left:14px;top:1556px">12</div>
<div class="sd" style="left:14px;top:1578px">13</div><div class="sd" style="left:14px;top:1600px">4</div>
<div class="sd" style="left:14px;top:1623px">3</div><div class="sd" style="left:14px;top:1645px">14</div>
<div class="sd" style="left:14px;top:1667px">11</div><div class="sd" style="left:14px;top:1689px">6</div>
<div class="sd" style="left:14px;top:1711px">7</div><div class="sd" style="left:14px;top:1733px">10</div>
<div class="sd" style="left:14px;top:1755px">15</div><div class="sd" style="left:14px;top:1777px">2</div>
<div class="sd" style="left:143px;top:1489px">1</div>
<div class="m" style="left:36px;top:1487px"><p class="a">Бабак А. А.</p><i>R:387<br>R:388</i><s>0:2</s><em>1</em><p class="z k">Землякова Л. Е.</p></div>
<div class="m" style="left:36px;top:1532px"><p class="a k">Мухаметханов ...</p><i>R:399<br>R:234</i><s>2:0</s><em>2</em><p class="z">Ранцан А. Я.</p></div>
<div class="m" style="left:36px;top:1576px"><p class="a">Остапенко А. В.</p><i>R:330<br>R:405</i><s>0:2</s><em>3</em><p class="z k">Тугарин В. К.</p></div>
<div class="m" style="left:36px;top:1621px"><p class="a k">Громов Г. И.</p><i>R:435<br>R:393</i><s class="tx">Тех</s><em>4</em><p class="z">Малинкина С. А.</p></div>
<div class="m" style="left:36px;top:1665px"><p class="a">Воротилкин Ю....</p><i>R:367<br>R:395</i><s>0:2</s><em>5</em><p class="z k">Висящев Д. А.</p></div>
<div class="m" style="left:36px;top:1709px"><p class="a">Жигжитов А. Е.</p><i>R:249<br>R:378</i><s>0:2</s><em>6</em><p class="z k">Говорин И. С.</p></div>
<div class="m" style="left:36px;top:1753px"><p class="a">Скоробогатько...</p><i>R:264<br>R:437</i><s>0:2</s><em>7</em><p class="z k">Грехнев В. В.</p></div>
<div class="m" style="left:165px;top:1487px"><p class="a k">Агапова Т. В.</p><i>R:453<br>R:388</i><s>2:0</s><em>8</em><p class="z">Землякова Л. Е.</p></div>
<div class="m" style="left:165px;top:1554px"><p class="a">Мухаметханов ...</p><i>R:399<br>R:405</i><s>1:2</s><em>9</em><p class="z k">Тугарин В. К.</p></div>
<div class="m" style="left:165px;top:1643px"><p class="a">Громов Г. И.</p><i>R:435<br>R:395</i><s>0:2</s><em>10</em><p class="z k">Висящев Д. А.</p></div>
<div class="m" style="left:165px;top:1732px"><p class="a">Говорин И. С.</p><i>R:378<br>R:407</i><s>1:2</s><em>11</em><p class="z k">Грехнев В. В.</p></div>
<div class="m" style="left:295px;top:1521px"><p class="a k">Агапова Т. В.</p><i>R:453<br>R:405</i><s>2:1</s><em>12</em><p class="z">Тугарин В. К.</p></div>
<div class="m" style="left:295px;top:1687px"><p class="a">Висящев Д. А.</p><i>R:395<br>R:437</i><s>1:2</s><em>13</em><p class="z k">Грехнев В. В.</p></div>
<div class="m" style="left:424px;top:1604px"><p class="a">Агапова Т. В.</p><i>R:453<br>R:437</i><s>0:2</s><em>14</em><p class="z k">Грехнев В. В.</p></div>
<div class="pl" style="left:504px;top:1603px">2</div><div class="pl" style="left:504px;top:1629px">1</div>
<div class="lb" style="left:125px;top:1504px">-18</div><div class="lb" style="left:125px;top:1548px">-15</div><div class="lb" style="left:125px;top:1582px">-15</div><div class="lb" style="left:125px;top:1637px">-16</div><div class="lb" style="left:125px;top:1671px">-16</div><div class="lb" style="left:125px;top:1725px">-17</div><div class="lb" style="left:125px;top:1759px">-17</div>
<div class="lb" style="left:255px;top:1503px">-21</div><div class="lb" style="left:255px;top:1559px">-20</div><div class="lb" style="left:255px;top:1659px">-19</div><div class="lb" style="left:255px;top:1737px">-18</div>
<div class="lb" style="left:384px;top:1536px">-24</div><div class="lb" style="left:384px;top:1693px">-25</div>

<div class="pi" style="left:36px;top:1803px">3...14</div><div class="pi" style="left:165px;top:1803px">3...12</div><div class="pi" style="left:295px;top:1803px">3...8</div><div class="pi" style="left:424px;top:1803px">3...6</div><div class="pi" style="left:553px;top:1803px">3...4</div>
<div class="sd" style="left:14px;top:1870px">-2</div><div class="sd" style="left:14px;top:1892px">-3</div>
<div class="sd" style="left:14px;top:1915px">-4</div><div class="sd" style="left:14px;top:1937px">-5</div>
<div class="sd" style="left:14px;top:1959px">-6</div><div class="sd" style="left:14px;top:1981px">-7</div>
<div class="sd" style="left:143px;top:1825px">-11</div><div class="sd" style="left:143px;top:1847px">-1</div>
<div class="sd" style="left:143px;top:1870px">-10</div><div class="sd" style="left:143px;top:1915px">-9</div><div class="sd" style="left:143px;top:1959px">-8</div>
<div class="sd" style="left:402px;top:1848px">-12</div><div class="sd" style="left:402px;top:1937px">-13</div>
<div class="m mc" style="left:36px;top:1868px"><p class="a">Ранцан А. Я.</p><i>R:234<br>R:330</i><s>0:2</s><em>15</em><p class="z k">Остапенко А. В.</p></div>
<div class="m mc" style="left:36px;top:1913px"><p class="a k">Малинкина С. А.</p><i>R:393<br>R:367</i><s>2:0</s><em>16</em><p class="z">Воротилкин Ю....</p></div>
<div class="m mc" style="left:36px;top:1957px"><p class="a k">Жигжитов А. Е.</p><i>R:249<br>R:264</i><s>2:1</s><em>17</em><p class="z">Скоробогатько...</p></div>
<div class="m mc" style="left:165px;top:1823px"><p class="a k">Говорин И. С.</p><i>R:378<br>R:387</i><s>2:1</s><em>18</em><p class="z">Бабак А. А.</p></div>
<div class="m mc" style="left:165px;top:1868px"><p class="a">Громов Г. И.</p><i>R:435<br>R:330</i><s>0:2</s><em>19</em><p class="z k">Остапенко А. В.</p></div>
<div class="m mc" style="left:165px;top:1913px"><p class="a k">Мухаметханов ...</p><i>R:399<br>R:393</i><s>2:1</s><em>20</em><p class="z">Малинкина С. А.</p></div>
<div class="m mc" style="left:165px;top:1957px"><p class="a k">Землякова Л. Е.</p><i>R:388<br>R:249</i><s>2:0</s><em>21</em><p class="z">Жигжитов А. Е.</p></div>
<div class="m mc" style="left:295px;top:1846px"><p class="a">Говорин И. С.</p><i>R:378<br>R:330</i><s>0:2</s><em>22</em><p class="z k">Остапенко А. В.</p></div>
<div class="m mc" style="left:295px;top:1935px"><p class="a">Мухаметханов ...</p><i>R:399<br>R:388</i><s>0:2</s><em>23</em><p class="z k">Землякова Л. Е.</p></div>
<div class="m mc" style="left:424px;top:1846px"><p class="a k">Тугарин В. К.</p><i>R:405<br>R:330</i><s>2:0</s><em>24</em><p class="z">Остапенко А. В.</p></div>
<div class="m mc" style="left:424px;top:1935px"><p class="a k">Висящев Д. А.</p><i>R:395<br>R:388</i><s>2:0</s><em>25</em><p class="z">Землякова Л. Е.</p></div>
<div class="m mc" style="left:553px;top:1890px"><p class="a">Тугарин В. К.</p><i>R:405<br>R:395</i><s class="tx">Тех</s><em>26</em><p class="z k">Висящев Д. А.</p></div>
<div class="pl" style="left:116px;top:1867px">11</div><div class="pl" style="left:116px;top:1938px">11</div><div class="pl" style="left:116px;top:1982px">11</div>
<div class="pl" style="left:245px;top:1848px">7</div><div class="pl" style="left:245px;top:1867px">7</div><div class="pl" style="left:245px;top:1938px">7</div><div class="pl" style="left:245px;top:1982px">7</div>
<div class="pl" style="left:375px;top:1845px">7</div><div class="pl" style="left:375px;top:1934px">7</div>
<div class="pl" style="left:504px;top:1871px">5</div><div class="pl" style="left:504px;top:1960px">5</div>
<div class="pl" style="left:633px;top:1889px">4</div><div class="pl" style="left:633px;top:1915px">3</div>

<!-- ===== FINAL-2 ===== -->
<div class="pi" style="left:36px;top:2032px">1/8</div><div class="pi" style="left:165px;top:2032px">1/4</div><div class="pi" style="left:295px;top:2032px">1/2</div><div class="pi" style="left:424px;top:2032px">Финал</div>
<div class="sd" style="left:14px;top:2054px">9</div><div class="sd" style="left:14px;top:2076px">8</div>
<div class="sd" style="left:14px;top:2099px">5</div><div class="sd" style="left:14px;top:2121px">12</div>
<div class="sd" style="left:14px;top:2143px">13</div><div class="sd" style="left:14px;top:2165px">4</div>
<div class="sd" style="left:14px;top:2188px">3</div><div class="sd" style="left:14px;top:2210px">14</div>
<div class="sd" style="left:14px;top:2232px">11</div><div class="sd" style="left:14px;top:2254px">6</div>
<div class="sd" style="left:14px;top:2276px">7</div><div class="sd" style="left:14px;top:2298px">10</div>
<div class="sd" style="left:14px;top:2320px">15</div><div class="sd" style="left:14px;top:2342px">2</div>
<div class="sd" style="left:143px;top:2054px">1</div>
<div class="m" style="left:36px;top:2052px"><p class="a">Кузнецов А. А.</p><i>R:266<br>R:200</i><s>1:2</s><em>1</em><p class="z k">Голубых Д. А.</p></div>
<div class="m" style="left:36px;top:2097px"><p class="a">Галкин А. С.</p><i>R:288<br>R:300</i><s>0:2</s><em>2</em><p class="z k">Нечкина З. С.</p></div>
<div class="m" style="left:36px;top:2141px"><p class="a">Ткачев И. А.</p><i>R:301<br>R:279</i><s>0:2</s><em>3</em><p class="z k">Амбросов Н. Н.</p></div>
<div class="m" style="left:36px;top:2186px"><p class="a k">Тимергалеев М...</p><i>R:200<br>R:186</i><s>2:0</s><em>4</em><p class="z">Летунова Е. А.</p></div>
<div class="m" style="left:36px;top:2230px"><p class="a">Соковец А. В.</p><i>R:261<br>R:291</i><s class="tx">Тех</s><em>5</em><p class="z k">Фомин А. И.</p></div>
<div class="m" style="left:36px;top:2274px"><p class="a">Казак Н. Ф.</p><i>R:296<br>R:304</i><s class="tx">Тех</s><em>6</em><p class="z k">Баторов М. С.</p></div>
<div class="m" style="left:36px;top:2318px"><p class="a">Казак Л. М.</p><i>R:214<br>R:303</i><s class="tx">Тех</s><em>7</em><p class="z k">Барышников А....</p></div>
<div class="m" style="left:165px;top:2052px"><p class="a k">Герасимов Д. А.</p><i>R:198<br>R:200</i><s>2:0</s><em>8</em><p class="z">Голубых Д. А.</p></div>
<div class="m" style="left:165px;top:2119px"><p class="a">Нечкина З. С.</p><i>R:300<br>R:279</i><s>0:2</s><em>9</em><p class="z k">Амбросов Н. Н.</p></div>
<div class="m" style="left:165px;top:2208px"><p class="a">Тимергалеев М...</p><i>R:200<br>R:291</i><s>1:2</s><em>10</em><p class="z k">Фомин А. И.</p></div>
<div class="m" style="left:165px;top:2297px"><p class="a">Баторов М. С.</p><i>R:304<br>R:303</i><s>1:2</s><em>11</em><p class="z k">Барышников А....</p></div>
<div class="m" style="left:295px;top:2086px"><p class="a k">Герасимов Д. А.</p><i>R:198<br>R:279</i><s>2:0</s><em>12</em><p class="z">Амбросов Н. Н.</p></div>
<div class="m" style="left:295px;top:2252px"><p class="a">Фомин А. И.</p><i>R:291<br>R:303</i><s>0:2</s><em>13</em><p class="z k">Барышников А....</p></div>
<div class="m" style="left:424px;top:2169px"><p class="a k">Герасимов Д. А.</p><i>R:198<br>R:303</i><s>2:1</s><em>14</em><p class="z">Барышников А...</p></div>
<div class="pl" style="left:504px;top:2168px">1</div><div class="pl" style="left:504px;top:2194px">2</div>
<div class="lb" style="left:125px;top:2069px">-18</div><div class="lb" style="left:125px;top:2113px">-15</div><div class="lb" style="left:125px;top:2147px">-15</div><div class="lb" style="left:125px;top:2202px">-16</div><div class="lb" style="left:125px;top:2236px">-16</div><div class="lb" style="left:125px;top:2290px">-17</div><div class="lb" style="left:125px;top:2324px">-17</div>
<div class="lb" style="left:255px;top:2068px">-21</div><div class="lb" style="left:255px;top:2124px">-20</div><div class="lb" style="left:255px;top:2224px">-19</div><div class="lb" style="left:255px;top:2302px">-18</div>
<div class="lb" style="left:384px;top:2101px">-24</div><div class="lb" style="left:384px;top:2258px">-25</div>

<div class="pi" style="left:36px;top:2368px">3...14</div><div class="pi" style="left:165px;top:2368px">3...12</div><div class="pi" style="left:295px;top:2368px">3...8</div><div class="pi" style="left:424px;top:2368px">3...6</div><div class="pi" style="left:553px;top:2368px">3...4</div>
<div class="sd" style="left:14px;top:2435px">-2</div><div class="sd" style="left:14px;top:2457px">-3</div>
<div class="sd" style="left:14px;top:2480px">-4</div><div class="sd" style="left:14px;top:2502px">-5</div>
<div class="sd" style="left:14px;top:2524px">-6</div><div class="sd" style="left:14px;top:2546px">-7</div>
<div class="sd" style="left:143px;top:2390px">-11</div><div class="sd" style="left:143px;top:2412px">-1</div>
<div class="sd" style="left:143px;top:2435px">-10</div><div class="sd" style="left:143px;top:2480px">-9</div><div class="sd" style="left:143px;top:2524px">-8</div>
<div class="sd" style="left:402px;top:2413px">-12</div><div class="sd" style="left:402px;top:2502px">-13</div>
<div class="m mc" style="left:36px;top:2433px"><p class="a">Галкин А. С.</p><i>R:288<br>R:301</i><s>1:2</s><em>15</em><p class="z k">Ткачев И. А.</p></div>
<div class="m mc" style="left:36px;top:2478px"><p class="a k">Летунова Е. А.</p><i>R:186<br>R:261</i><s class="tx">Тех</s><em>16</em><p class="z">Соковец А. В.</p></div>
<div class="m mc" style="left:36px;top:2522px"><p class="a k">Казак Н. Ф.</p><i>R:296<br>R:214</i><s class="tx">Тех</s><em>17</em><p class="z">Казак Л. М.</p></div>
<div class="m mc" style="left:165px;top:2388px"><p class="a">Баторов М. С.</p><i>R:304<br>R:266</i><s>0:2</s><em>18</em><p class="z k">Кузнецов А. А.</p></div>
<div class="m mc" style="left:165px;top:2433px"><p class="a">Тимергалеев М...</p><i>R:200<br>R:301</i><s>1:2</s><em>19</em><p class="z k">Ткачев И. А.</p></div>
<div class="m mc" style="left:165px;top:2478px"><p class="a k">Нечкина З. С.</p><i>R:300<br>R:186</i><s>2:0</s><em>20</em><p class="z">Летунова Е. А.</p></div>
<div class="m mc" style="left:165px;top:2522px"><p class="a k">Голубых Д. А.</p><i>R:200<br>R:296</i><s class="tx">Тех</s><em>21</em><p class="z">Казак Н. Ф.</p></div>
<div class="m mc" style="left:295px;top:2411px"><p class="a">Кузнецов А. А.</p><i>R:266<br>R:301</i><s>0:2</s><em>22</em><p class="z k">Ткачев И. А.</p></div>
<div class="m mc" style="left:295px;top:2500px"><p class="a k">Нечкина З. С.</p><i>R:300<br>R:200</i><s>2:1</s><em>23</em><p class="z">Голубых Д. А.</p></div>
<div class="m mc" style="left:424px;top:2411px"><p class="a">Амбросов Н. Н.</p><i>R:279<br>R:301</i><s class="tx">Тех</s><em>24</em><p class="z k">Ткачев И. А.</p></div>
<div class="m mc" style="left:424px;top:2500px"><p class="a">Фомин А. И.</p><i>R:291<br>R:300</i><s>0:2</s><em>25</em><p class="z k">Нечкина З. С.</p></div>
<div class="m mc" style="left:553px;top:2455px"><p class="a k">Ткачев И. А.</p><i>R:301<br>R:300</i><s class="tx">Тех</s><em>26</em><p class="z">Нечкина З. С.</p></div>
<div class="pl" style="left:116px;top:2432px">11</div><div class="pl" style="left:116px;top:2503px">11</div><div class="pl" style="left:116px;top:2547px">11</div>
<div class="pl" style="left:245px;top:2387px">7</div><div class="pl" style="left:245px;top:2432px">7</div><div class="pl" style="left:245px;top:2503px">7</div><div class="pl" style="left:245px;top:2547px">7</div>
<div class="pl" style="left:375px;top:2410px">7</div><div class="pl" style="left:375px;top:2525px">7</div>
<div class="pl" style="left:504px;top:2410px">5</div><div class="pl" style="left:504px;top:2499px">5</div>
<div class="pl" style="left:633px;top:2454px">3</div><div class="pl" style="left:633px;top:2480px">4</div>

<!-- ===== FINAL-3 ===== -->
<div class="pi" style="left:36px;top:2597px">1/8</div><div class="pi" style="left:165px;top:2597px">1/4</div><div class="pi" style="left:295px;top:2597px">1/2</div><div class="pi" style="left:424px;top:2597px">Финал</div>
<div class="sd" style="left:14px;top:2620px">9</div><div class="sd" style="left:14px;top:2642px">8</div>
<div class="sd" style="left:14px;top:2664px">5</div><div class="sd" style="left:14px;top:2686px">12</div>
<div class="sd" style="left:14px;top:2709px">13</div><div class="sd" style="left:14px;top:2731px">4</div>
<div class="sd" style="left:14px;top:2753px">3</div><div class="sd" style="left:14px;top:2775px">14</div>
<div class="sd" style="left:14px;top:2798px">11</div><div class="sd" style="left:14px;top:2820px">6</div>
<div class="sd" style="left:14px;top:2842px">7</div><div class="sd" style="left:14px;top:2864px">10</div>
<div class="sd" style="left:143px;top:2620px">1</div><div class="sd" style="left:143px;top:2864px">2</div>
<div class="m" style="left:36px;top:2618px"><p class="a">Кашин М. А.</p><i>R:200<br>R:247</i><s class="tx">Тех</s><em>1</em><p class="z k">Нечаева Е. О.</p></div>
<div class="m" style="left:36px;top:2662px"><p class="a k">Казак М. И.</p><i>R:313<br>R:346</i><s class="tx">Тех</s><em>2</em><p class="z">Федотов Н. А.</p></div>
<div class="m" style="left:36px;top:2707px"><p class="a">Шамшутдинова ...</p><i>R:193<br>R:314</i><s>0:2</s><em>3</em><p class="z k">Щепеткин А. О.</p></div>
<div class="m" style="left:36px;top:2751px"><p class="a">Патрушев Д. М.</p><i>R:277<br>R:198</i><s class="tx">Тех</s><em>4</em><p class="z k">Чуднова А. К.</p></div>
<div class="m" style="left:36px;top:2796px"><p class="a">Кропочева С. М.</p><i>R:175<br>R:200</i><s class="tx">Тех</s><em>5</em><p class="z k">Куликов А. Н.</p></div>
<div class="m" style="left:36px;top:2840px"><p class="a">Цыбикова И. А.</p><i>R:200<br>R:182</i><s class="tx">Тех</s><em>6</em><p class="z k">Кириченко А. С.</p></div>
<div class="m" style="left:165px;top:2618px"><p class="a k">Куликов А. В.</p><i>R:204<br>R:247</i><s>2:1</s><em>7</em><p class="z">Нечаева Е. О.</p></div>
<div class="m" style="left:165px;top:2684px"><p class="a">Казак М. И.</p><i>R:313<br>R:314</i><s class="tx">Тех</s><em>8</em><p class="z k">Щепеткин А. О.</p></div>
<div class="m" style="left:165px;top:2774px"><p class="a k">Чуднова А. К.</p><i>R:198<br>R:200</i><s class="tx">Тех</s><em>9</em><p class="z">Куликов А. Н.</p></div>
<div class="m" style="left:165px;top:2840px"><p class="a">Кириченко А. С.</p><i>R:182<br>R:57</i><s>0:2</s><em>10</em><p class="z k">Подкорытова Г...</p></div>
<div class="m" style="left:295px;top:2652px"><p class="a k">Куликов А. В.</p><i>R:204<br>R:314</i><s>2:0</s><em>11</em><p class="z">Щепеткин А. О.</p></div>
<div class="m" style="left:295px;top:2807px"><p class="a">Чуднова А. К.</p><i>R:198<br>R:57</i><s class="tx">Тех</s><em>12</em><p class="z k">Подкорытова Г...</p></div>
<div class="m" style="left:424px;top:2728px"><p class="a">Куликов А. В.</p><i>R:204<br>R:57</i><s>0:2</s><em>13</em><p class="z k">Подкорытова Г...</p></div>
<div class="pl" style="left:504px;top:2727px">2</div><div class="pl" style="left:504px;top:2753px">1</div>
<div class="lb" style="left:125px;top:2635px">-16</div><div class="lb" style="left:125px;top:2678px">-14</div><div class="lb" style="left:125px;top:2713px">-14</div><div class="lb" style="left:125px;top:2767px">-15</div><div class="lb" style="left:125px;top:2802px">-15</div><div class="lb" style="left:125px;top:2839px">-19</div>
<div class="lb" style="left:255px;top:2634px">-19</div><div class="lb" style="left:255px;top:2689px">-18</div><div class="lb" style="left:255px;top:2790px">-17</div><div class="lb" style="left:255px;top:2846px">-16</div>
<div class="lb" style="left:384px;top:2667px">-22</div><div class="lb" style="left:384px;top:2813px">-23</div>

<div class="pi" style="left:36px;top:2889px">3...12</div><div class="pi" style="left:165px;top:2889px">3...12</div><div class="pi" style="left:295px;top:2889px">3...8</div><div class="pi" style="left:424px;top:2889px">3...6</div><div class="pi" style="left:553px;top:2889px">3...4</div>
<div class="sd" style="left:14px;top:2956px">-2</div><div class="sd" style="left:14px;top:2978px">-3</div>
<div class="sd" style="left:14px;top:3001px">-4</div><div class="sd" style="left:14px;top:3023px">-5</div>
<div class="sd" style="left:143px;top:2912px">-10</div><div class="sd" style="left:143px;top:2934px">-1</div>
<div class="sd" style="left:143px;top:2956px">-9</div><div class="sd" style="left:143px;top:3001px">-8</div>
<div class="sd" style="left:143px;top:3045px">-7</div><div class="sd" style="left:143px;top:3067px">-6</div>
<div class="sd" style="left:402px;top:2934px">-11</div><div class="sd" style="left:402px;top:3023px">-12</div>
<div class="m mc" style="left:36px;top:2954px"><p class="a">Федотов Н. А.</p><i>R:346<br>R:193</i><s class="tx">Тех</s><em>14</em><p class="z k">Шамшутдинова ...</p></div>
<div class="m mc" style="left:36px;top:2999px"><p class="a">Патрушев Д. М.</p><i>R:277<br>R:175</i><s class="tx">Тех</s><em>15</em><p class="z k">Кропочева С. М.</p></div>
<div class="m mc" style="left:165px;top:2910px"><p class="a k">Кириченко А. С.</p><i>R:182<br>R:200</i><s class="tx">Тех</s><em>16</em><p class="z">Кашин М. А.</p></div>
<div class="m mc" style="left:165px;top:2954px"><p class="a">Куликов А. Н.</p><i>R:200<br>R:193</i><s class="tx">Тех</s><em>17</em><p class="z k">Шамшутдинова ...</p></div>
<div class="m mc" style="left:165px;top:2999px"><p class="a k">Казак М. И.</p><i>R:313<br>R:175</i><s class="tx">Тех</s><em>18</em><p class="z">Кропочева С. М.</p></div>
<div class="m mc" style="left:165px;top:3043px"><p class="a k">Нечаева Е. О.</p><i>R:247<br>R:200</i><s class="tx">Тех</s><em>19</em><p class="z">Цыбикова И. А.</p></div>
<div class="m mc" style="left:295px;top:2932px"><p class="a k">Кириченко А. С.</p><i>R:182<br>R:193</i><s>2:0</s><em>20</em><p class="z">Шамшутдинова ..</p></div>
<div class="m mc" style="left:295px;top:3021px"><p class="a">Казак М. И.</p><i>R:313<br>R:247</i><s class="tx">Тех</s><em>21</em><p class="z k">Нечаева Е. О.</p></div>
<div class="m mc" style="left:424px;top:2932px"><p class="a k">Щепеткин А. О.</p><i>R:314<br>R:182</i><s>2:0</s><em>22</em><p class="z">Кириченко А. С.</p></div>
<div class="m mc" style="left:424px;top:3021px"><p class="a">Чуднова А. К.</p><i>R:198<br>R:247</i><s class="tx">Тех</s><em>23</em><p class="z k">Нечаева Е. О.</p></div>
<div class="m mc" style="left:553px;top:2976px"><p class="a k">Щепеткин А. О.</p><i>R:314<br>R:247</i><s>2:0</s><em>24</em><p class="z">Нечаева Е. О.</p></div>
<div class="pl" style="left:116px;top:2953px">11</div><div class="pl" style="left:116px;top:2998px">11</div>
<div class="pl" style="left:245px;top:2935px">7</div><div class="pl" style="left:245px;top:2953px">7</div><div class="pl" style="left:245px;top:3024px">7</div><div class="pl" style="left:245px;top:3068px">7</div>
<div class="pl" style="left:375px;top:2957px">7</div><div class="pl" style="left:375px;top:3020px">7</div>
<div class="pl" style="left:504px;top:2957px">5</div><div class="pl" style="left:504px;top:3020px">5</div>
<div class="pl" style="left:633px;top:2975px">3</div><div class="pl" style="left:633px;top:3001px">4</div>

</div></body></html>
